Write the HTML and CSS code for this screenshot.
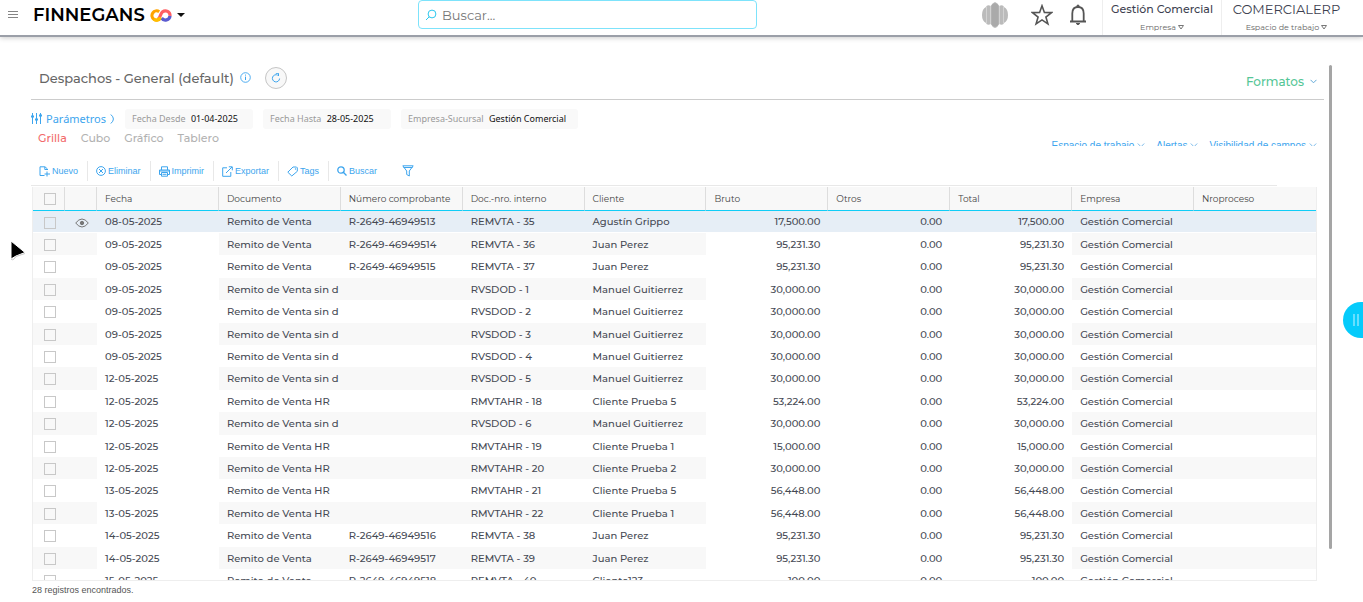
FILE: index.html
```html
<!DOCTYPE html>
<html lang="es">
<head>
<meta charset="utf-8">
<title>Despachos - General</title>
<link rel="stylesheet" href="styles.css">
</head>
<body>
<header class="topbar">
  <button class="menu" aria-label="Menú"><svg width="10" height="8" viewBox="0 0 10 8"><path d="M0 .5h10M0 3.5h10M0 6.5h10" stroke="#858585"/></svg></button>
  <button class="brand"><span class="brand-name">FINNEGANS</span>
    <svg width="22" height="13" viewBox="0 0 22 13" fill="none" stroke-width="3.2"><path d="M10.3 9.2A4.6 4.6 0 1 1 9.2 2.7" stroke="#ffa400"/><path d="M8 10.2C11 8 10 5 12.6 2.8A4.6 4.6 0 0 1 20 6.8" stroke="#ff5f63"/><path d="M20 6.8A4.6 4.6 0 0 1 11.6 9" stroke="#5b5bd0"/><path d="M3.8 10.2C6.3 11.9 9.5 11 10.3 8.2" stroke="#ffbf00"/></svg>
    <svg width="8" height="4" viewBox="0 0 8 4"><path d="M0 0h8L4 4z" fill="#111"/></svg>
  </button>
  <label class="search">
    <svg width="12" height="12" viewBox="0 0 12 12" fill="none" stroke="#2cc8ee"><circle cx="7" cy="5" r="3.9"/><path d="M4.2 7.8 1 11"/></svg>
    <input type="search" placeholder="Buscar..." aria-label="Buscar">
  </label>
  <div class="top-icons">
    <svg class="avatar" width="28" height="26" viewBox="0 0 28 26" fill="#bbb"><path d="M14 0q3 1 4 4 4-2 5 1 4 2 4 8t-4 8q-1 3-5 1-1 3-4 4-3-1-4-4-4 2-5-1-4-2-4-8t4-8q1-3 5-1 1-3 4-4z"/><path d="M5.500 5v16M9.500 4v18M18.500 4v18M22.500 5v16" stroke="#ddd" stroke-width=".7"/><path d="M10.500 3 14 1l3.500 2v20L14 25l-3.500-2z" fill="#aaa"/></svg>
    <button aria-label="Favoritos"><svg width="22" height="22" viewBox="0 0 22 22" fill="none" stroke="#555" stroke-width="1.600"><path d="M11 1.800 13.400 8.400 20.500 8.600 14.900 13 16.900 19.900 11 15.900 5.100 19.900 7.100 13 1.500 8.600 8.600 8.400z"/></svg></button>
    <button aria-label="Notificaciones"><svg width="18" height="22" viewBox="0 0 18 22" fill="none" stroke="#555" stroke-width="1.800"><path d="M1 17.500h16M3.300 17V9.500C3.300 5 5.500 3 9 3s5.700 2 5.700 6.500V17"/><path d="M7.500 2.200 9 .8l1.500 1.400zM7.200 19.500h3.600L9 20.800z" fill="#555" stroke-width="1"/></svg></button>
  </div>
  <button class="context company"><span class="context-name">Gestión Comercial</span><span class="context-kind">Empresa <svg width="6" height="5" viewBox="0 0 6 5" fill="none" stroke="#777"><path d="M.5.500h5L3 4z"/></svg></span></button>
  <button class="context workspace"><span class="context-name">COMERCIALERP</span><span class="context-kind">Espacio de trabajo <svg width="6" height="5" viewBox="0 0 6 5" fill="none" stroke="#777"><path d="M.5.500h5L3 4z"/></svg></span></button>
</header>

<main class="page">
  <div class="title-row">
    <h1>Despachos - General (default)</h1>
    <svg class="info" width="11" height="11" viewBox="0 0 11 11" fill="none" stroke="#3da5ee"><circle cx="5.500" cy="5.500" r="4.800" stroke-width=".9"/><path d="M5.500 4.600v3.400M5.500 2.600v1"/></svg>
    <button class="refresh" aria-label="Actualizar"><svg width="10" height="10" viewBox="0 0 10 10" fill="none" stroke="#3da5ee"><path d="M8.600 5.500A3.600 3.600 0 1 1 6.800 2.200M4.800.3h2.700v2.700"/></svg></button>
    <button class="formats">Formatos <svg width="7" height="5" viewBox="0 0 7 5" fill="none" stroke="#62a9d8"><path d="m.5.800 3 3 3-3"/></svg></button>
  </div>

  <div class="params">
    <button class="params-toggle"><svg width="11" height="11" viewBox="0 0 11 11" stroke="#3da5ee" fill="none"><path d="M1.500 0v11M5.500 0v11M9.500 0v11"/><path d="M0 3.500h3M4 6.500h3M8 2.500h3" stroke-width="2"/></svg>Parámetros<svg width="5" height="10" viewBox="0 0 5 10" fill="none" stroke="#3da5ee"><path d="M.8.500Q6 5 .8 9.500"/></svg></button>
    <span class="chip">Fecha Desde <b>01-04-2025</b></span>
    <span class="chip">Fecha Hasta <b>28-05-2025</b></span>
    <span class="chip chip-wide">Empresa-Sucursal <b>Gestión Comercial</b></span>
  </div>

  <div class="tabs-row">
    <nav class="tabs"><a class="active" href="#grilla">Grilla</a><a href="#cubo">Cubo</a><a href="#grafico">Gráfico</a><a href="#tablero">Tablero</a></nav>
    <div class="view-options">
      <button>Espacio de trabajo <svg width="8" height="5" viewBox="0 0 8 5" fill="none" stroke="#7dbbe9"><path d="m.8.500 3.200 3.300L7.200.5"/></svg></button>
      <button>Alertas <svg width="8" height="5" viewBox="0 0 8 5" fill="none" stroke="#7dbbe9"><path d="m.8.500 3.200 3.300L7.200.5"/></svg></button>
      <button>Visibilidad de campos <svg width="8" height="5" viewBox="0 0 8 5" fill="none" stroke="#7dbbe9"><path d="m.8.500 3.200 3.300L7.200.5"/></svg></button>
    </div>
  </div>

  <div class="toolbar">
    <button><svg width="11" height="11" viewBox="0 0 11 11"><path d="M8.500 4V3L6 .8H1v8.700h4.500M5.800 1v2.500h2.500M8 5.500v5M5.500 8H11"/></svg>Nuevo</button>
    <button><svg width="10" height="10" viewBox="0 0 10 10"><circle cx="5" cy="5" r="4.400"/><path d="m3 3 4 4M7 3 3 7"/></svg>Eliminar</button>
    <button><svg width="11" height="11" viewBox="0 0 11 11"><path d="M2.500 4V.8h6V4M2.500 8.500h-2V4h10v4.500h-2M2.500 6.500h6v3.700h-6zM1 5h9M3.500 8.300h4"/></svg>Imprimir</button>
    <button><svg width="11" height="11" viewBox="0 0 11 11"><path d="M5 1.800H.7v8.500h8.100V6M4 7l6-6M6.800.8h3.500v3.500"/></svg>Exportar</button>
    <button><svg width="11" height="11" viewBox="0 0 11 11"><path d="M6 1h3.500l.8.800v3.500L4.800 10 .8 6.200z"/><circle cx="8.500" cy="3" r=".3"/></svg>Tags</button>
    <button class="find"><svg width="10" height="10" viewBox="0 0 10 10" stroke-width="1.300"><circle cx="4" cy="4" r="3.200"/><path d="m6.300 6.300 3.200 3.200"/></svg>Buscar</button>
    <button class="filter" aria-label="Filtrar"><svg width="12" height="12" viewBox="0 0 12 12"><path d="M.8.800h10.400L7.300 6v5L4.700 9.500V6zM1.500 2.500h9"/></svg></button>
  </div>

  <div class="grid">
    <table>
      <colgroup><col class="narrow"><col class="narrow"><col><col><col><col><col><col><col><col><col><col></colgroup>
      <thead><tr><th><input type="checkbox" aria-label="Seleccionar todo"></th><th></th><th>Fecha</th><th>Documento</th><th>Número comprobante</th><th>Doc.-nro. interno</th><th>Cliente</th><th>Bruto</th><th>Otros</th><th>Total</th><th>Empresa</th><th>Nroproceso</th></tr></thead>
      <tbody>
        <tr class="selected"><td><input type="checkbox" aria-label="REMVTA - 35"></td><td><svg class="eye" width="14" height="10" viewBox="0 0 14 10" fill="none" stroke="#777"><path d="M.7 5Q7-3 13.300 5 7 13 .7 5z"/><circle cx="7" cy="5" r="1.700" fill="#777"/></svg></td><td>08-05-2025</td><td>Remito de Venta</td><td>R-2649-46949513</td><td>REMVTA - 35</td><td>Agustín Grippo</td><td>17,500.00</td><td>0.00</td><td>17,500.00</td><td>Gestión Comercial</td><td></td></tr>
        <tr><td><input type="checkbox" aria-label="REMVTA - 36"></td><td></td><td>09-05-2025</td><td>Remito de Venta</td><td>R-2649-46949514</td><td>REMVTA - 36</td><td>Juan Perez</td><td>95,231.30</td><td>0.00</td><td>95,231.30</td><td>Gestión Comercial</td><td></td></tr>
        <tr><td><input type="checkbox" aria-label="REMVTA - 37"></td><td></td><td>09-05-2025</td><td>Remito de Venta</td><td>R-2649-46949515</td><td>REMVTA - 37</td><td>Juan Perez</td><td>95,231.30</td><td>0.00</td><td>95,231.30</td><td>Gestión Comercial</td><td></td></tr>
        <tr><td><input type="checkbox" aria-label="RVSDOD - 1"></td><td></td><td>09-05-2025</td><td>Remito de Venta sin d</td><td></td><td>RVSDOD - 1</td><td>Manuel Guitierrez</td><td>30,000.00</td><td>0.00</td><td>30,000.00</td><td>Gestión Comercial</td><td></td></tr>
        <tr><td><input type="checkbox" aria-label="RVSDOD - 2"></td><td></td><td>09-05-2025</td><td>Remito de Venta sin d</td><td></td><td>RVSDOD - 2</td><td>Manuel Guitierrez</td><td>30,000.00</td><td>0.00</td><td>30,000.00</td><td>Gestión Comercial</td><td></td></tr>
        <tr><td><input type="checkbox" aria-label="RVSDOD - 3"></td><td></td><td>09-05-2025</td><td>Remito de Venta sin d</td><td></td><td>RVSDOD - 3</td><td>Manuel Guitierrez</td><td>30,000.00</td><td>0.00</td><td>30,000.00</td><td>Gestión Comercial</td><td></td></tr>
        <tr><td><input type="checkbox" aria-label="RVSDOD - 4"></td><td></td><td>09-05-2025</td><td>Remito de Venta sin d</td><td></td><td>RVSDOD - 4</td><td>Manuel Guitierrez</td><td>30,000.00</td><td>0.00</td><td>30,000.00</td><td>Gestión Comercial</td><td></td></tr>
        <tr><td><input type="checkbox" aria-label="RVSDOD - 5"></td><td></td><td>12-05-2025</td><td>Remito de Venta sin d</td><td></td><td>RVSDOD - 5</td><td>Manuel Guitierrez</td><td>30,000.00</td><td>0.00</td><td>30,000.00</td><td>Gestión Comercial</td><td></td></tr>
        <tr><td><input type="checkbox" aria-label="RMVTAHR - 18"></td><td></td><td>12-05-2025</td><td>Remito de Venta HR</td><td></td><td>RMVTAHR - 18</td><td>Cliente Prueba 5</td><td>53,224.00</td><td>0.00</td><td>53,224.00</td><td>Gestión Comercial</td><td></td></tr>
        <tr><td><input type="checkbox" aria-label="RVSDOD - 6"></td><td></td><td>12-05-2025</td><td>Remito de Venta sin d</td><td></td><td>RVSDOD - 6</td><td>Manuel Guitierrez</td><td>30,000.00</td><td>0.00</td><td>30,000.00</td><td>Gestión Comercial</td><td></td></tr>
        <tr><td><input type="checkbox" aria-label="RMVTAHR - 19"></td><td></td><td>12-05-2025</td><td>Remito de Venta HR</td><td></td><td>RMVTAHR - 19</td><td>Cliente Prueba 1</td><td>15,000.00</td><td>0.00</td><td>15,000.00</td><td>Gestión Comercial</td><td></td></tr>
        <tr><td><input type="checkbox" aria-label="RMVTAHR - 20"></td><td></td><td>12-05-2025</td><td>Remito de Venta HR</td><td></td><td>RMVTAHR - 20</td><td>Cliente Prueba 2</td><td>30,000.00</td><td>0.00</td><td>30,000.00</td><td>Gestión Comercial</td><td></td></tr>
        <tr><td><input type="checkbox" aria-label="RMVTAHR - 21"></td><td></td><td>13-05-2025</td><td>Remito de Venta HR</td><td></td><td>RMVTAHR - 21</td><td>Cliente Prueba 5</td><td>56,448.00</td><td>0.00</td><td>56,448.00</td><td>Gestión Comercial</td><td></td></tr>
        <tr><td><input type="checkbox" aria-label="RMVTAHR - 22"></td><td></td><td>13-05-2025</td><td>Remito de Venta HR</td><td></td><td>RMVTAHR - 22</td><td>Cliente Prueba 1</td><td>56,448.00</td><td>0.00</td><td>56,448.00</td><td>Gestión Comercial</td><td></td></tr>
        <tr><td><input type="checkbox" aria-label="REMVTA - 38"></td><td></td><td>14-05-2025</td><td>Remito de Venta</td><td>R-2649-46949516</td><td>REMVTA - 38</td><td>Juan Perez</td><td>95,231.30</td><td>0.00</td><td>95,231.30</td><td>Gestión Comercial</td><td></td></tr>
        <tr><td><input type="checkbox" aria-label="REMVTA - 39"></td><td></td><td>14-05-2025</td><td>Remito de Venta</td><td>R-2649-46949517</td><td>REMVTA - 39</td><td>Juan Perez</td><td>95,231.30</td><td>0.00</td><td>95,231.30</td><td>Gestión Comercial</td><td></td></tr>
        <tr><td><input type="checkbox" aria-label="REMVTA - 40"></td><td></td><td>15-05-2025</td><td>Remito de Venta</td><td>R-2649-46949518</td><td>REMVTA - 40</td><td>Cliente123</td><td>100.00</td><td>0.00</td><td>100.00</td><td>Gestión Comercial</td><td></td></tr>
      </tbody>
    </table>
  </div>
  <p class="count">28 registros encontrados.</p>
</main>
<div class="page-scroll"></div>
<button class="side-tab" aria-label="Abrir panel"><svg width="6" height="12" viewBox="0 0 6 12" stroke="#9ceaff"><path d="M1 0v12M5 0v12" stroke-width="1.300"/></svg></button>
<svg class="pointer" width="16" height="21" viewBox="0 0 16 21"><path d="M1 1v18l5-3 9-3.500z" fill="#000" stroke="#fff"/><path d="M1 19q1.500 1.500 3 0l2-2.500 9-3" fill="none" stroke="#bbb" stroke-width=".8"/></svg>
</body>
</html>
```

FILE: styles.css
```css
* { box-sizing: border-box; }
body {
  margin: 0;
  height: 100vh;
  overflow: hidden;
  display: flex;
  flex-direction: column;
  position: relative;
  background: #fff;
  color: #464a54;
  font: 11px/16px Montserrat, Inter, sans-serif;
}
button {
  display: flex;
  align-items: center;
  padding: 0;
  border: 0;
  background: none;
  font: inherit;
  color: inherit;
  white-space: nowrap;
}
svg { flex: none; }

/* Top bar */
.topbar {
  display: flex;
  align-items: center;
  height: 37px;
  flex: none;
  padding-left: 8px;
  border-bottom: 2px solid #9b9fa8;
  box-shadow: 0 1px 5px #ccc;
}
.menu { margin: 0 15px 6px 0; }
.brand { flex: 7; gap: 5px; padding-bottom: 5px; }
.brand-name { font-size: 18px; line-height: 20px; font-weight: 600; color: #000; }
.search {
  display: flex;
  align-items: center;
  align-self: flex-start;
  gap: 5px;
  width: 339px;
  height: 29px;
  padding: 0 6px;
  border: 1px solid #7de3fb;
  border-radius: 4px;
}
.search input {
  flex: 1;
  min-width: 0;
  border: 0;
  padding: 0;
  outline: 0;
  background: none;
  font: inherit;
  font-size: 13px;
}
.search input::placeholder { color: #777; }
.top-icons {
  flex: 6;
  display: flex;
  justify-content: flex-end;
  align-items: center;
  gap: 16px;
  padding: 0 15px 6px 0;
}
.avatar { margin-right: 6px; }
.context {
  flex-direction: column;
  align-self: stretch;
  border-left: 1px solid #eee;
  color: #3d3f50;
}
.company { width: 119px; font-size: 11px; font-weight: 500; }
.workspace { width: 142px; padding-right: 12px; font-size: 13px; }
.context-name { line-height: 18px; }
.context-kind { font-size: 8px; line-height: 18px; font-weight: 400; color: #666; }

/* Page heading */
.page {
  flex: 1;
  min-height: 0;
  display: flex;
  flex-direction: column;
  padding: 22px 39px 3px 31px;
}
.title-row {
  display: flex;
  align-items: center;
  height: 41px;
  flex: none;
  padding: 0 7px 3px 8px;
  border-bottom: 1px solid #ccc;
}
h1 { margin: 0; font-size: 13px; line-height: 20px; font-weight: 500; color: #666; }
.info { margin: 0 14px 0 6px; }
.refresh {
  justify-content: center;
  width: 22px;
  height: 22px;
  border: 1px solid #c5c5c5;
  border-radius: 50%;
  background: #f8f8f8;
}
.formats { margin-left: auto; gap: 6px; padding-top: 8px; font-size: 12px; font-weight: 500; color: #55c696; }

/* Parameters */
.params { display: flex; align-items: center; gap: 10px; padding-top: 9px; height: 28px; flex: none; }
.params-toggle { gap: 4px; font: 11px/16px "Noto Sans", sans-serif; color: #3da5ee; }
.chip {
  width: 128px;
  height: 20px;
  padding: 0 7px;
  border-radius: 3px;
  background: #f9f9f9;
  color: #999;
  font: 9px/20px "Noto Sans", sans-serif;
  white-space: nowrap;
}
.chip b { margin-left: 3px; font-weight: 400; color: #111; }
.chip-wide { width: 177px; }

.tabs-row {
  display: flex;
  align-items: flex-start;
  justify-content: space-between;
  height: 29px;
  flex: none;
  padding: 0 7px;
}
.tabs { display: flex; gap: 14px; font-weight: 500; line-height: 20px; }
.tabs a { color: #b2b2b2; text-decoration: none; }
.tabs .active { color: #f26a6a; }
.view-options { display: flex; gap: 11px; height: 7px; margin-top: 11px; overflow: hidden; font: 10px/13px "Liberation Sans", sans-serif; color: #3da5ee; }
.view-options button { height: 13px; gap: 3px; }

.toolbar {
  display: flex;
  align-items: center;
  height: 29px;
  flex: none;
  margin-right: 47px;
  border-bottom: 1px solid #e8e8e8;
  color: #3da5ee;
  font: 9px/16px "Liberation Sans", sans-serif;
}
.toolbar svg { fill: none; stroke: #3da5ee; }
.toolbar button { gap: 2px; height: 20px; padding: 0 9px 0 8px; border-right: 1px solid #e8e8e8; }
.toolbar .find, .toolbar .filter { border-right: 0; }
.toolbar .filter { margin-left: 8px; }

/* Data grid */
.grid {
  flex: 1;
  min-height: 0;
  margin: 1px 7px 0 1px;
  overflow: hidden;
  border: 1px solid #eee;
  border-top: 0;
}
table { width: 100%; table-layout: fixed; border-collapse: separate; border-spacing: 0; }
.narrow { width: 32px; }
th, td { padding: 0 8px; text-align: left; white-space: nowrap; overflow: hidden; }
th {
  height: 24px;
  font-size: 9px;
  font-weight: 400;
  color: #444;
  background: #f8f8f8;
  border-bottom: 1px solid #10cdf7;
  border-right: 1px solid #ddd;
}
th:last-child { border-right: 0; }
td { height: 22px; padding: 1px 0 0 8px; font-size: 10px; line-height: 21px; font-weight: 500; vertical-align: top; }
tr:nth-child(5n+3) td, tr:nth-child(5n) td { height: 23px; }
td:nth-child(n+8):nth-child(-n+10) { text-align: right; padding-right: 8px; }
tr:nth-child(even) td { background: #f8f8f8; }
tr:nth-child(even) td:nth-child(3), tr:nth-child(even) td:nth-child(n+8):nth-child(-n+10) { background: #fff; }
tr.selected td { background: #e6eef6; line-height: 20px; border-bottom: 1px solid #fff; }
th:first-child, td:first-child { padding: 0 0 0 11px; }
.eye { display: block; margin: 6px 0 0 2px; }
input[type="checkbox"] {
  appearance: none;
  display: block;
  width: 12px;
  height: 12px;
  margin: 0;
  border: 1px solid #c8c8c8;
}
td input[type="checkbox"] { margin-top: 6px; }
.count { margin: 0 1px; font: 9px/18px "Liberation Sans", sans-serif; color: #555; }

/* Overlays */
.page-scroll { position: absolute; top: 65px; right: 31px; bottom: 53px; width: 3px; border-radius: 2px; background: #a5a5a5; }
.side-tab { position: absolute; right: 0; top: 302px; width: 20px; height: 36px; padding-left: 10px; border-radius: 18px 0 0 18px; background: #05cbfb; }
.pointer { position: absolute; left: 10px; top: 240px; }
```
